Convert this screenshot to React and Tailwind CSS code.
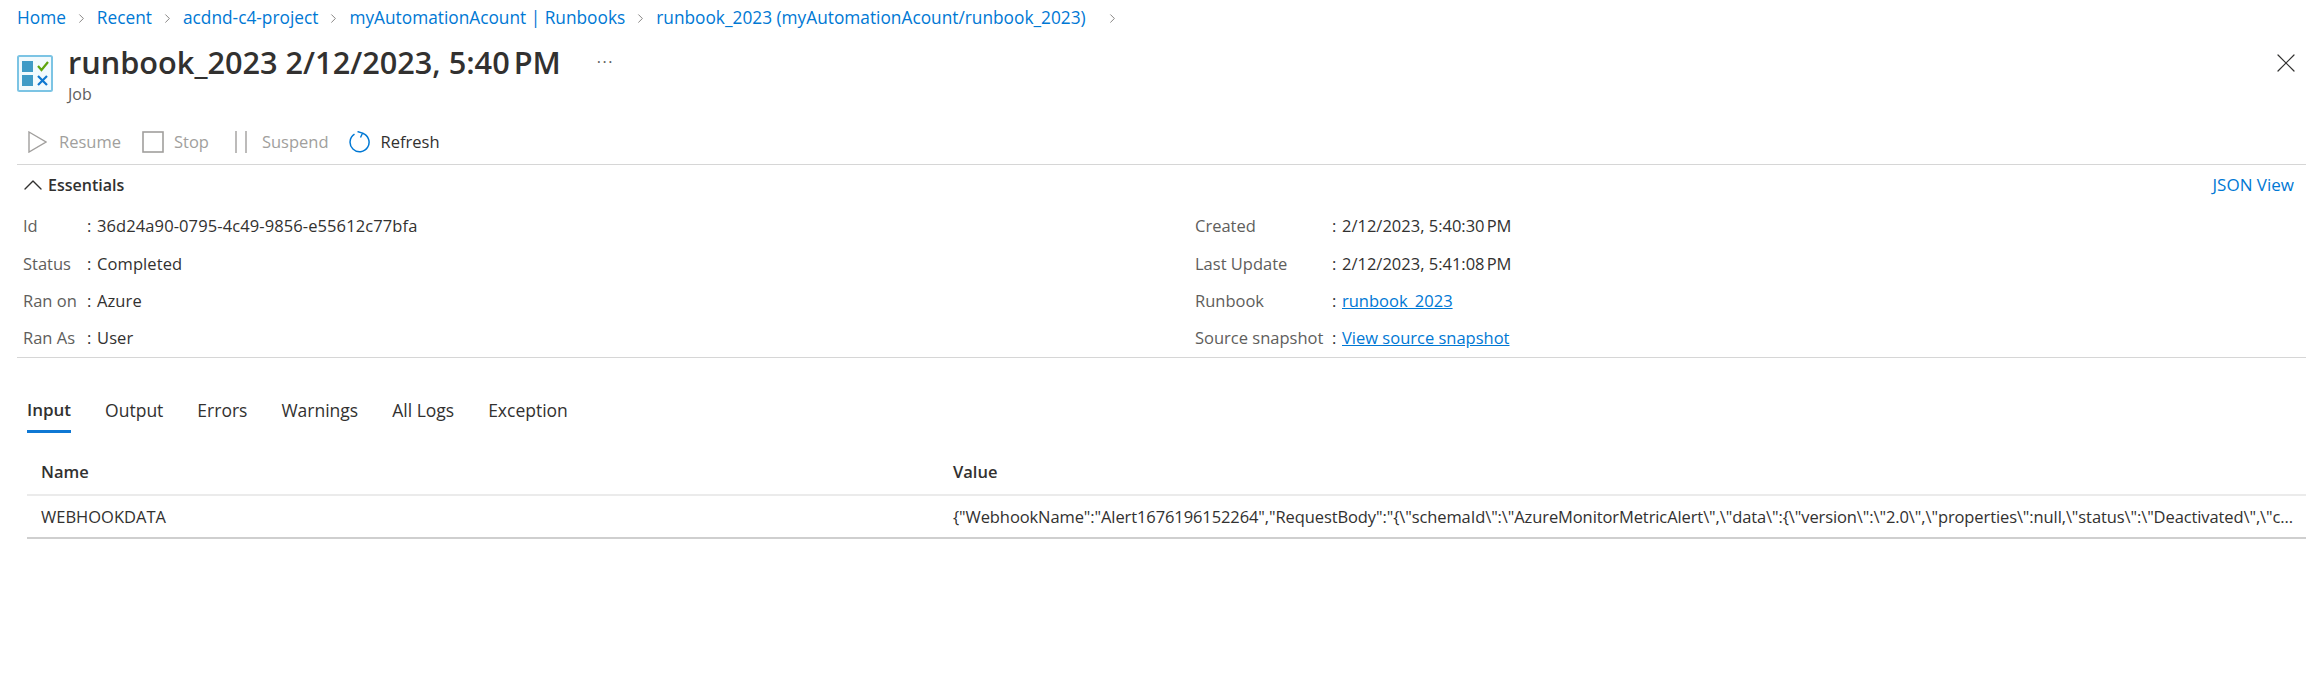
import React from "react";
import { ChevronRight, ChevronUp, X } from "lucide-react";

const crumbs = [
  "Home",
  "Recent",
  "acdnd-c4-project",
  "myAutomationAcount | Runbooks",
  "runbook_2023 (myAutomationAcount/runbook_2023)",
];

const leftRows = [
  ["Id", "36d24a90-0795-4c49-9856-e55612c77bfa"],
  ["Status", "Completed"],
  ["Ran on", "Azure"],
  ["Ran As", "User"],
];

const rightRows = [
  ["Created", "2/12/2023, 5:40:30\u202fPM"],
  ["Last Update", "2/12/2023, 5:41:08\u202fPM"],
  ["Runbook", "runbook_2023", true],
  ["Source snapshot", "View source snapshot", true],
];

const tabs = ["Input", "Output", "Errors", "Warnings", "All Logs", "Exception"];

const webhookValue =
  '{"WebhookName":"Alert1676196152264","RequestBody":"{\\"schemaId\\":\\"AzureMonitorMetricAlert\\",\\"data\\":{\\"version\\":\\"2.0\\",\\"properties\\":null,\\"status\\":\\"Deactivated\\",\\"c...';

const JobIcon = () => (
  <svg width="36" height="37" viewBox="0 0 36 37" className="shrink-0 mt-[9px]">
    <rect x="1" y="1" width="34" height="35" rx="1.5" fill="#f2fafd" stroke="#7cc4e4" strokeWidth="2" />
    <rect x="5" y="6" width="11" height="11" fill="#3f9bc6" />
    <rect x="5" y="20" width="11" height="11" fill="#3f9bc6" />
    <path d="M21 11l3.5 4L31 7" fill="none" stroke="#5ea50e" strokeWidth="2.2" />
    <path d="M21 21l9 9M30 21l-9 9" fill="none" stroke="#0f78d0" strokeWidth="2.2" />
  </svg>
);

const ResumeIcon = () => (
  <svg width="19" height="22" viewBox="0 0 19 22">
    <path d="M1 1l17 10L1 21z" fill="none" stroke="#a19f9d" strokeWidth="1.4" />
  </svg>
);

const StopIcon = () => (
  <svg width="22" height="22" viewBox="0 0 22 22">
    <rect x="1" y="1" width="20" height="20" fill="none" stroke="#a19f9d" strokeWidth="1.6" />
  </svg>
);

const SuspendIcon = () => (
  <svg width="12" height="22" viewBox="0 0 12 22">
    <path d="M1 0v22M11 0v22" fill="none" stroke="#a19f9d" strokeWidth="1.4" />
  </svg>
);

const RefreshIcon = () => (
  <svg width="22" height="22" viewBox="0 0 22 22">
    <path d="M6.5 3.2A9.5 9.5 0 1 0 14.5 2.2" fill="none" stroke="#0078d4" strokeWidth="1.5" />
    <path d="M9.5 0.5L14.5 2.2L12.5 6.5" fill="none" stroke="#0078d4" strokeWidth="1.4" />
  </svg>
);

const DetailRows = ({ rows, labelWidth, valueClass = "" }) => (
  <div className="flex flex-col">
    {rows.map(([label, value, isLink]) => (
      <div key={label} className="flex items-center h-[37.3px]">
        <span className={`${labelWidth} text-[#605e5c] whitespace-nowrap`}>{label}</span>
        <span className="w-[10px] text-[#323130]">:</span>
        {isLink ? (
          <a className="text-[#0078d4] underline whitespace-nowrap">{value}</a>
        ) : (
          <span className={`text-[#323130] whitespace-nowrap ${valueClass}`}>{value}</span>
        )}
      </div>
    ))}
  </div>
);

const App = () => {
  return (
    <div className="w-[2306px] h-[674px] bg-white overflow-hidden text-[16.5px] leading-[24px] text-[#323130] font-['Open_Sans',sans-serif]">
      {/* Breadcrumb */}
      <nav className="flex items-center h-[36px] pl-[17px] text-[17.3px] text-[#0078d4] whitespace-nowrap">
        {crumbs.map((crumb, i) => (
          <React.Fragment key={crumb}>
            <a>{crumb}</a>
            <ChevronRight
              className={`w-[15px] h-[15px] mr-[8px] text-[#605e5c] ${i === crumbs.length - 1 ? "ml-[19px]" : "ml-[8px]"}`}
              strokeWidth={1.2}
            />
          </React.Fragment>
        ))}
      </nav>

      {/* Title */}
      <header className="flex items-start pl-[17px] pr-[4px] h-[84px] pt-[10px]">
        <JobIcon />
        <div className="ml-[15px] flex flex-col">
          <div className="flex items-center h-[32px]">
            <h1 className="text-[30.7px] font-semibold leading-[32px] whitespace-nowrap">
              runbook_2023 2/12/2023, 5:40{"\u202f"}PM
            </h1>
            <span className="ml-[36px] text-[#605e5c] text-[16px] leading-[18px] tracking-[1.5px] pb-[10px]">...</span>
          </div>
          <span className="text-[#605e5c] text-[16px] leading-[20px] mt-[6px]">Job</span>
        </div>
        <X className="ml-auto w-[32px] h-[32px] mt-[1px] text-[#323130]" strokeWidth={0.9} />
      </header>

      {/* Toolbar */}
      <div className="flex items-center h-[44px] pl-[28px] whitespace-nowrap">
        <ResumeIcon />
        <span className="ml-[12px] text-[#a19f9d]">Resume</span>
        <span className="ml-[21px] flex"><StopIcon /></span>
        <span className="ml-[10px] text-[#a19f9d]">Stop</span>
        <span className="ml-[26px] flex"><SuspendIcon /></span>
        <span className="ml-[15px] text-[#a19f9d]">Suspend</span>
        <span className="ml-[19px] flex"><RefreshIcon /></span>
        <span className="ml-[11px] text-[#323130]">Refresh</span>
      </div>

      {/* Essentials */}
      <section className="ml-[17px] border-t border-b border-[#d6d6d6] h-[194px] flex flex-col">
        <div className="flex items-center justify-between h-[41px] pr-[12px] pt-[1px]">
          <div className="flex items-center">
            <ChevronUp className="w-[32px] h-[32px] text-[#323130]" strokeWidth={1} />
            <span className="-ml-[1px] text-[16px] font-semibold">Essentials</span>
          </div>
          <a className="text-[17px] text-[#0078d4]">JSON View</a>
        </div>
        <div className="flex pl-[6px] pt-[3px]">
          <div className="w-[1172px]">
            <DetailRows rows={leftRows} labelWidth="w-[64px]" valueClass="tracking-[0.1px]" />
          </div>
          <DetailRows rows={rightRows} labelWidth="w-[137px]" />
        </div>
      </section>

      {/* Tabs */}
      <div className="flex gap-[34px] ml-[27px] mt-[40px] h-[35px] text-[17.5px] whitespace-nowrap">
        {tabs.map((tab, i) => (
          <div
            key={tab}
            className={`h-[35px] ${i === 0 ? "font-semibold text-[17px] border-b-[3px] border-[#0f78d4]" : ""}`}
          >
            {tab}
          </div>
        ))}
      </div>

      {/* Table */}
      <div className="ml-[27px] mt-[19px]">
        <div className="grid grid-cols-[912px_1fr] items-center h-[44px] pb-[2px] pl-[14px] font-semibold border-b-2 border-[#ebebeb]">
          <span>Name</span>
          <span>Value</span>
        </div>
        <div className="grid grid-cols-[912px_1fr] items-center h-[43px] pl-[14px] border-b-2 border-[#cfcfcf]">
          <span>WEBHOOKDATA</span>
          <span className="whitespace-nowrap tracking-[-0.1px]">{webhookValue}</span>
        </div>
      </div>
    </div>
  );
};

export default App;
